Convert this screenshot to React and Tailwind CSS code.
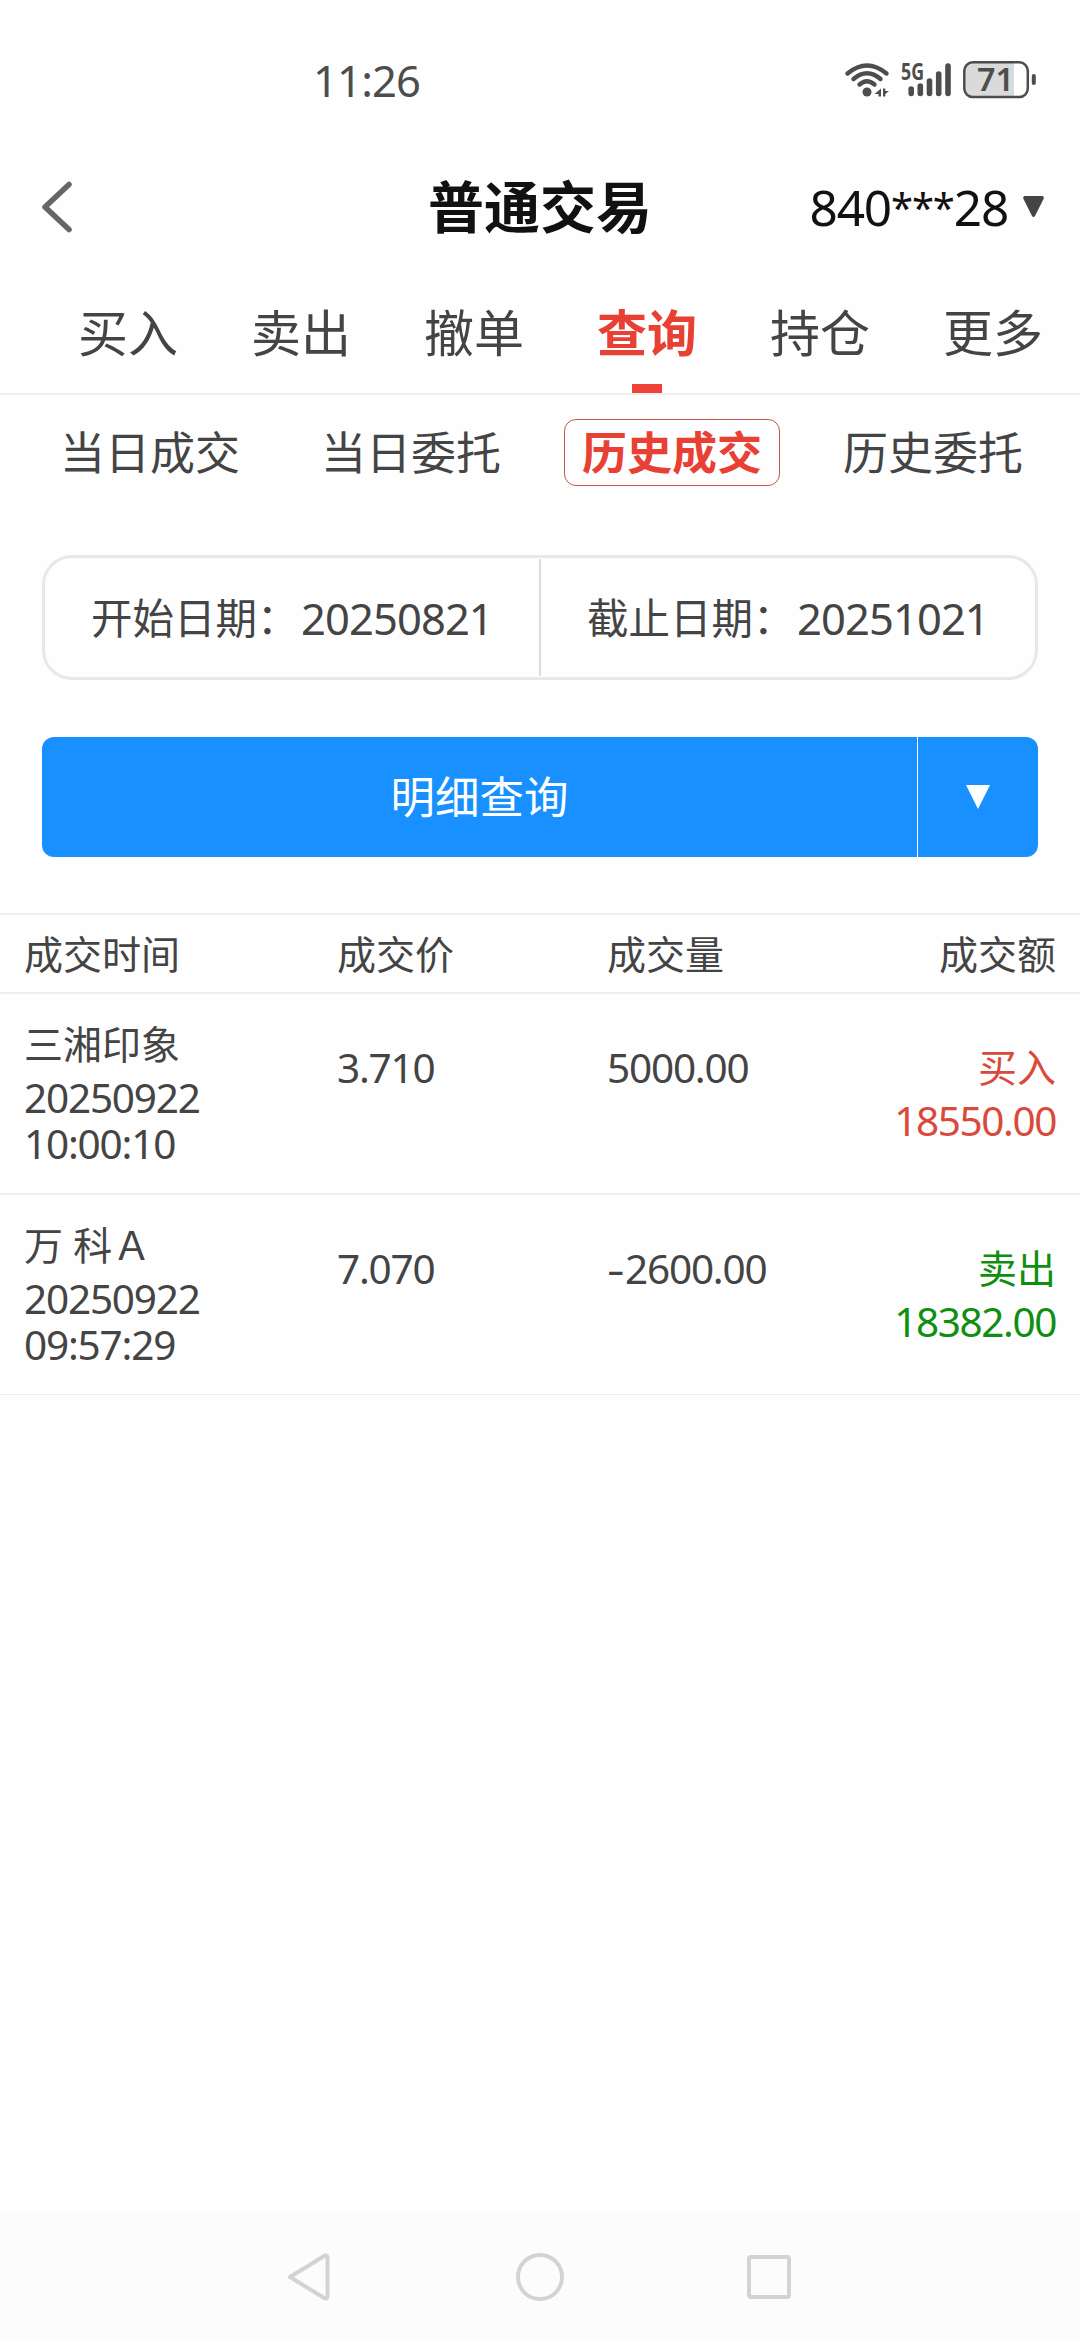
import clsx from "clsx";

const TABS = ["买入", "卖出", "撤单", "查询", "持仓", "更多"];
const SUB_TABS = ["当日成交", "当日委托", "历史成交", "历史委托"];

const TRADES = [
  { name: "三湘印象", date: "20250922", time: "10:00:10", price: "3.710", volume: "5000.00", side: "买入", amount: "18550.00" },
  { name: "万 科Ａ", date: "20250922", time: "09:57:29", price: "7.070", volume: "-2600.00", side: "卖出", amount: "18382.00" },
];

export default function App() {
  return (
    <div className="w-[1080px] h-[2340px] flex flex-col overflow-hidden bg-[#fefefe] text-[#444] font-['Noto_Sans','Noto_Sans_CJK_SC',sans-serif]">
      <StatusBar />
      <Header />
      <MainTabs active="查询" />
      <SubTabs active="历史成交" />
      <DateRange start="20250821" end="20251021" />
      <QueryButton />
      <TradeTable />
      <SystemNav />
    </div>
  );
}

function StatusBar() {
  return (
    <div className="h-[160px] shrink-0 flex items-center justify-between pl-[313px] pr-[44px] text-[#4d4d4d]">
      <span className="text-[43.5px] leading-[60px] tracking-[-0.8px]">11:26</span>
      <svg width="192" height="40" viewBox="844 61 192 40" fill="none" className="overflow-visible">
        {/* wifi */}
        <g stroke="#4d4d4d" strokeWidth="4.4" strokeLinecap="round">
          <path d="M847.5 74.5Q867 58.5 886.5 74.5" />
          <path d="M853.5 80Q867 68.5 880.5 80" />
          <path d="M859.5 85.5Q867 79 874.5 85.5" />
        </g>
        <circle cx="867" cy="93" r="4.5" fill="#4d4d4d" />
        <path d="M881 89.5V97.5H878.5V95H874.5ZM883 89.5V97.5H885.3V95L889 92H885.3V89.5Z" fill="#4d4d4d" />
        {/* signal */}
        <text x="901" y="80.5" fontSize="23" fontWeight="700" textLength="23" lengthAdjust="spacingAndGlyphs" fill="#4d4d4d">5G</text>
        <g stroke="#4d4d4d" strokeWidth="5.6" strokeLinecap="round">
          <path d="M911.2 90v4.5M920.3 87v7.5M929.5 82v12.5M938.7 75v19.5M948 67v27.5" />
        </g>
        {/* battery */}
        <path d="M972 63.5H1014V97.5H972Q964.5 97.5 964.5 90V71Q964.5 63.5 972 63.5Z" fill="#dadada" />
        <rect x="964.3" y="63.3" width="63.5" height="34.8" rx="8.5" stroke="#4d4d4d" strokeWidth="2.5" />
        <rect x="1031.8" y="75" width="4" height="11" rx="2" fill="#4d4d4d" />
        <text x="977" y="92.2" fontSize="32.5" fontWeight="600" textLength="37" lengthAdjust="spacingAndGlyphs" fill="#4d4d4d">71</text>
      </svg>
    </div>
  );
}

function Header() {
  return (
    <header className="h-[96px] shrink-0 grid grid-cols-[1fr_auto_1fr] items-center px-[40px] text-[#111]">
      <svg width="36" height="56" viewBox="0 0 36 56" fill="none" className="-mt-[3px]">
        <path d="M29 5.5L5 28L29 50.5" stroke="#666" strokeWidth="5.5" strokeLinecap="round" strokeLinejoin="round" />
      </svg>
      <h1 className="text-[56px] leading-[80px] font-bold -mt-[4px]">普通交易</h1>
      <div className="flex items-center justify-end gap-[15px] -mt-[4px] -mr-[4px]">
        <span className="flex text-[49.5px] leading-[70px] tracking-[-1.2px] pt-[2px]">
          840<span className="text-[40px] tracking-[-1.1px]">***</span>28
        </span>
        <svg width="21" height="21" viewBox="0 0 21 21">
          <path d="M1.5 0H19.5Q21.5 1 20.5 3L12 20Q10.5 22 9 20L.5 3Q-.5 1 1.5 0Z" fill="#444" />
        </svg>
      </div>
    </header>
  );
}

function MainTabs({ active }) {
  return (
    <nav className="h-[139px] shrink-0 flex gap-[73px] pl-[78px] pt-[44px] border-b-2 border-[#eee]">
      {TABS.map((tab) => (
        <button key={tab} className="w-[100px] shrink-0 flex flex-col items-center">
          <span className={clsx("text-[50px] leading-[66px]", tab === active && "font-bold text-[#e84134]")}>{tab}</span>
          {tab === active && <span className="w-[30px] h-[9px] mt-auto bg-[#ef4135]" />}
        </button>
      ))}
    </nav>
  );
}

function SubTabs({ active }) {
  return (
    <div className="shrink-0 flex gap-[45px] pl-[42px] pt-[24px]">
      {SUB_TABS.map((tab) => (
        <button
          key={tab}
          className={clsx(
            "w-[216px] h-[67px] shrink-0 flex items-center justify-center text-[45px] leading-[60px] rounded-[12px] border",
            tab === active ? "font-bold text-[#e84134] border-[#c8564c]" : "border-transparent"
          )}
        >
          {tab}
        </button>
      ))}
    </div>
  );
}

function DateRange({ start, end }) {
  return (
    <div className="h-[125px] shrink-0 mt-[69px] mx-[42px] flex items-center rounded-[30px] border-[3px] border-[#e8e8e8]">
      <DateField label="开始日期" value={start} />
      <div className="w-[2px] h-[117px] bg-[#ddd]" />
      <DateField label="截止日期" value={end} />
    </div>
  );
}

function DateField({ label, value }) {
  return (
    <div className="flex-1 flex items-center pl-[46px] leading-[60px]">
      <span className="w-[210px] text-[41.5px] whitespace-nowrap">{label}：</span>
      <span className="text-[43.5px] tracking-[-0.9px]">{value}</span>
    </div>
  );
}

function QueryButton() {
  return (
    <div className="h-[120px] shrink-0 mt-[57px] mx-[42px] flex rounded-[12px] bg-[#1890ff] text-white">
      <button className="flex-1 text-[44.5px] leading-[60px]">明细查询</button>
      <button className="w-[121px] flex items-center justify-center border-l border-white">
        <svg width="24" height="24" viewBox="0 0 24 24">
          <path d="M0 0H24L12 24Z" fill="#fff" />
        </svg>
      </button>
    </div>
  );
}

function TradeTable() {
  return (
    <div className="mt-[56px] flex-1">
      <div className="h-[81px] grid grid-cols-[313px_270px_1fr_auto] items-center px-[24px] border-y-2 border-[#eee] text-[39px] leading-[56px]">
        <span>成交时间</span>
        <span>成交价</span>
        <span>成交量</span>
        <span>成交额</span>
      </div>
      {TRADES.map((trade) => (
        <TradeRow key={trade.name} trade={trade} />
      ))}
    </div>
  );
}

function TradeRow({ trade }) {
  const negative = trade.volume.startsWith("-");

  return (
    <div className="h-[201px] last:h-[200px] grid grid-cols-[313px_270px_1fr_auto] px-[24px] border-b-2 last:border-b border-[#eee] text-[40.5px] leading-[46px] tracking-[-1.2px]">
      <div className="pt-[23px]">
        <p className="text-[39px] leading-[53px] mb-[5px] tracking-normal">{trade.name}</p>
        <p>{trade.date}</p>
        <p>{trade.time}</p>
      </div>
      <p className="pt-[51px]">{trade.price}</p>
      <p className="pt-[51px]">
        {negative && <span className="inline-block w-[18px] origin-left scale-x-[1.35]">-</span>}
        {trade.volume.replace("-", "")}
      </p>
      <div className={clsx("pt-[46px] text-right", trade.side === "买入" ? "text-[#d94a3d]" : "text-[#0f8f0f]")}>
        <p className="text-[39px] leading-[53px] mb-[5px] tracking-normal">{trade.side}</p>
        <p className="tracking-[-1.4px]">{trade.amount}</p>
      </div>
    </div>
  );
}

function SystemNav() {
  return (
    <div className="h-[126px] shrink-0 flex items-center justify-center gap-[182px] bg-[#fcfcfc]">
      <svg width="48" height="48" viewBox="0 0 48 48" fill="none" stroke="#d3d3d3" strokeWidth="4" strokeLinejoin="round">
        <path d="M4 24L39 2.5Q41.5 2 41.5 5V43Q41.5 46 39 45.5Z" />
      </svg>
      <svg width="48" height="48" viewBox="0 0 48 48" fill="none" stroke="#d3d3d3" strokeWidth="4">
        <circle cx="24" cy="24" r="22" />
      </svg>
      <svg width="48" height="48" viewBox="0 0 48 48" fill="none" stroke="#d3d3d3" strokeWidth="4">
        <rect x="3" y="4" width="40" height="40" rx="2" />
      </svg>
    </div>
  );
}
